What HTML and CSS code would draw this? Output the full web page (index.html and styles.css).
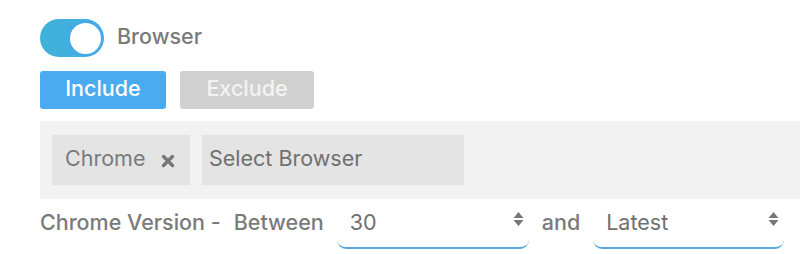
FILE: index.html
```html
<!DOCTYPE html>
<html>
<head>
<meta charset="utf-8">
<link rel="stylesheet" href="styles.css">
</head>
<body>
<div class="page">
  <div class="toggle-row">
    <span class="toggle"><span class="knob"></span></span>
    <span class="toggle-label">Browser</span>
  </div>
  <div class="btn-row">
    <button class="btn btn-on">Include</button>
    <button class="btn btn-off">Exclude</button>
  </div>
  <div class="panel">
    <span class="chip"><span class="chip-text">Chrome</span>
      <svg class="chip-x" width="14" height="14" viewBox="0 0 14 14"><path d="M2.5 2.5 L11.5 11.5 M11.5 2.5 L2.5 11.5" stroke="#777" stroke-width="3.4" stroke-linecap="round"/></svg>
    </span>
    <span class="select-box">Select Browser</span>
  </div>
  <div class="version-row">
    <span class="label">Chrome Version -</span>
    <span class="label">Between</span>
    <span class="select sel-1">30<span class="arrows"><svg width="11" height="14" viewBox="0 0 11 14"><path d="M5.5 0 L10.5 6 H0.5 Z M0.5 8 H10.5 L5.5 14 Z" fill="#777"/></svg></span></span>
    <span class="label">and</span>
    <span class="select sel-2">Latest<span class="arrows"><svg width="11" height="14" viewBox="0 0 11 14"><path d="M5.5 0 L10.5 6 H0.5 Z M0.5 8 H10.5 L5.5 14 Z" fill="#777"/></svg></span></span>
  </div>
</div>
</body>
</html>
```
FILE: styles.css
```css
html, body {
  margin: 0;
  padding: 0;
  background: #fff;
}
body {
  font-family: "Inter", "Noto Sans", sans-serif;
  color: #7d7d7d;
  width: 800px;
  height: 254px;
  overflow: hidden;
}
.page {
  padding: 19px 0 0 40px;
}
.toggle-row {
  display: flex;
  align-items: center;
  gap: 13px;
  height: 38px;
}
.toggle {
  display: flex;
  align-items: center;
  justify-content: flex-end;
  width: 64px;
  height: 38px;
  border-radius: 19px;
  background: linear-gradient(90deg, #3db3d6, #46a9ec);
  box-sizing: border-box;
  padding-right: 1px;
}
.knob {
  width: 35px;
  height: 35px;
  border-radius: 50%;
  background: #fff;
  box-sizing: border-box;
  border: 2px solid #45aae9;
}
.toggle-label {
  font-size: 21.5px;
  font-weight: 500;
  color: #7a7a7a;
  margin-bottom: 4px;
}
.btn-row {
  display: flex;
  gap: 14px;
  margin-top: 14px;
}
.btn {
  font-family: inherit;
  font-size: 21.5px;
  font-weight: 500;
  height: 38px;
  border: none;
  border-radius: 3px;
  padding: 0 0 4px 0;
}
.btn-on {
  width: 126px;
  background: #4aabf0;
  color: #fff;
}
.btn-off {
  width: 134px;
  background: #d0d0d0;
  color: #f3f3f3;
}
.panel {
  margin-top: 12px;
  background: #f2f2f2;
  height: 78px;
  box-sizing: border-box;
  padding: 14px 12px;
  display: flex;
  gap: 12px;
}
.chip {
  width: 138px;
  height: 50px;
  box-sizing: border-box;
  background: #e4e4e4;
  display: flex;
  align-items: center;
  padding-left: 13px;
  font-size: 21.5px;
  color: #7a7a7a;
}
.chip-text {
  margin-bottom: 4px;
}
.chip-x {
  margin-left: 16px;
  margin-top: 1px;
}
.select-box {
  width: 262px;
  height: 50px;
  box-sizing: border-box;
  background: #e4e4e4;
  display: flex;
  align-items: center;
  padding: 0 0 4px 7px;
  font-size: 21.5px;
  color: #707070;
}
.version-row {
  display: flex;
  align-items: center;
  height: 50px;
}
.label {
  font-size: 21.5px;
  font-weight: 500;
  color: #7a7a7a;
  margin-right: 13px;
  margin-bottom: 4px;
}
.select {
  position: relative;
  height: 50px;
  box-sizing: border-box;
  border-bottom: 2px solid #5aa7d9;
  border-radius: 0 0 9px 9px;
  display: flex;
  align-items: center;
  padding: 0 0 3px 13px;
  font-size: 21.5px;
  color: #707070;
  margin-right: 13px;
}
.sel-1 {
  width: 192px;
}
.sel-2 {
  width: 191px;
}
.arrows {
  position: absolute;
  right: 5px;
  top: 13px;
  line-height: 0;
}
```
